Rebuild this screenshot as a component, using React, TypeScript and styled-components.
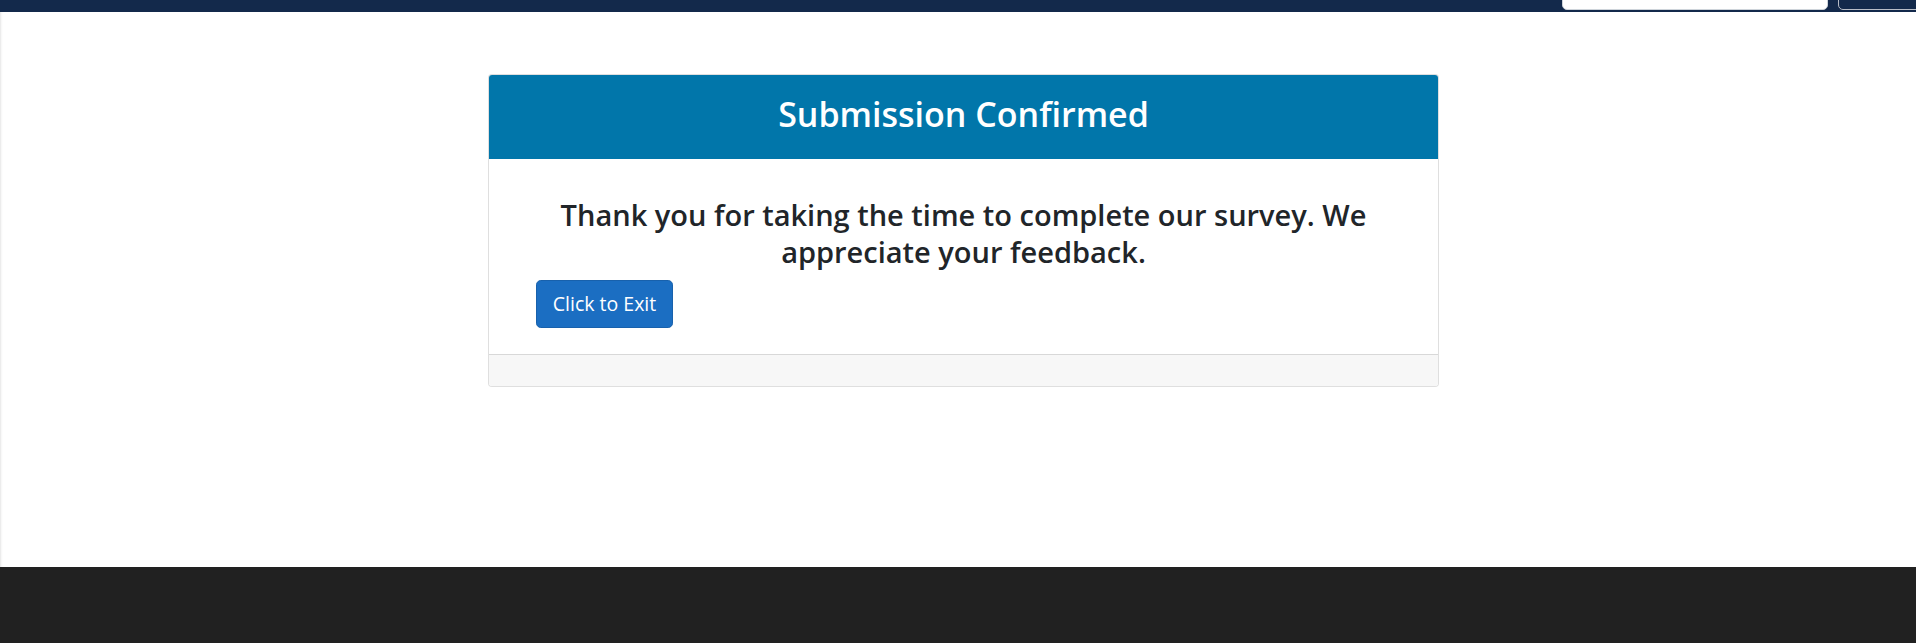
import React from "react";
import styled, { createGlobalStyle } from "styled-components";

const GlobalStyle = createGlobalStyle`
  html, body {
    margin: 0;
    padding: 0;
    background: #ffffff;
  }
  body {
    font-family: "Open Sans", "Noto Sans", "Liberation Sans", sans-serif;
    color: #212529;
  }
  * { box-sizing: border-box; }
`;

const Page = styled.div`
  display: flex;
  flex-direction: column;
  width: 1916px;
  height: 643px;
  overflow: hidden;
`;

const TopBar = styled.header`
  height: 12px;
  background: #13294b;
  display: flex;
  justify-content: flex-end;
  align-items: flex-end;
  gap: 10px;
  padding-bottom: 2px;
  overflow: hidden;
  flex-shrink: 0;
`;

const SearchInput = styled.div`
  width: 266px;
  height: 36px;
  background: #ffffff;
  border: 1px solid #ced4da;
  border-radius: 5px;
  flex-shrink: 0;
`;

const SearchButton = styled.div`
  width: 90px;
  height: 36px;
  margin-right: -12px;
  background: #13294b;
  border: 1px solid #b7bcc6;
  border-radius: 5px;
  flex-shrink: 0;
`;

const Main = styled.main`
  flex: 0 0 555px;
  display: flex;
  justify-content: center;
  align-items: flex-start;
  padding: 62px 0 0 10px;
  border-left: 1px solid #ececec;
  box-shadow: inset 2px 0 3px -2px rgba(0, 0, 0, 0.08);
`;

const Card = styled.section`
  width: 951px;
  border: 1px solid rgba(0, 0, 0, 0.125);
  border-radius: 4px;
  overflow: hidden;
  background: #ffffff;
`;

const CardHeader = styled.div`
  background: #0176aa;
  height: 84px;
  display: flex;
  align-items: center;
  justify-content: center;
`;

const Title = styled.h2`
  margin: 0;
  color: #ffffff;
  font-size: 34px;
  font-weight: 600;
  line-height: 1.2;
  padding-bottom: 6px;
`;

const CardBody = styled.div`
  padding: 37px 20px 26px;
`;

const Message = styled.h3`
  margin: 0 0 10px;
  text-align: center;
  font-size: 29px;
  font-weight: 600;
  line-height: 37px;
  color: #212529;
`;

const Actions = styled.div`
  display: flex;
  padding: 0 27px;
`;

const ExitButton = styled.button`
  font-family: inherit;
  font-size: 19.5px;
  font-weight: 400;
  line-height: 30px;
  color: #ffffff;
  background: #1b6ec2;
  border: 1px solid #1861ac;
  border-radius: 4.8px;
  padding: 8px 0;
  height: 48px;
  width: 137px;
  cursor: pointer;
`;

const CardFooter = styled.div`
  height: 32px;
  background: #f7f7f7;
  border-top: 1px solid rgba(0, 0, 0, 0.125);
`;

const Footer = styled.footer`
  flex: 1 0 auto;
  background: #212121;
`;

export default function App() {
  return (
    <>
      <GlobalStyle />
      <Page>
        <TopBar>
          <SearchInput />
          <SearchButton />
        </TopBar>
        <Main>
          <Card>
            <CardHeader>
              <Title>Submission Confirmed</Title>
            </CardHeader>
            <CardBody>
              <Message>
                Thank you for taking the time to complete our survey. We
                appreciate your feedback.
              </Message>
              <Actions>
                <ExitButton type="button">Click to Exit</ExitButton>
              </Actions>
            </CardBody>
            <CardFooter />
          </Card>
        </Main>
        <Footer />
      </Page>
    </>
  );
}
